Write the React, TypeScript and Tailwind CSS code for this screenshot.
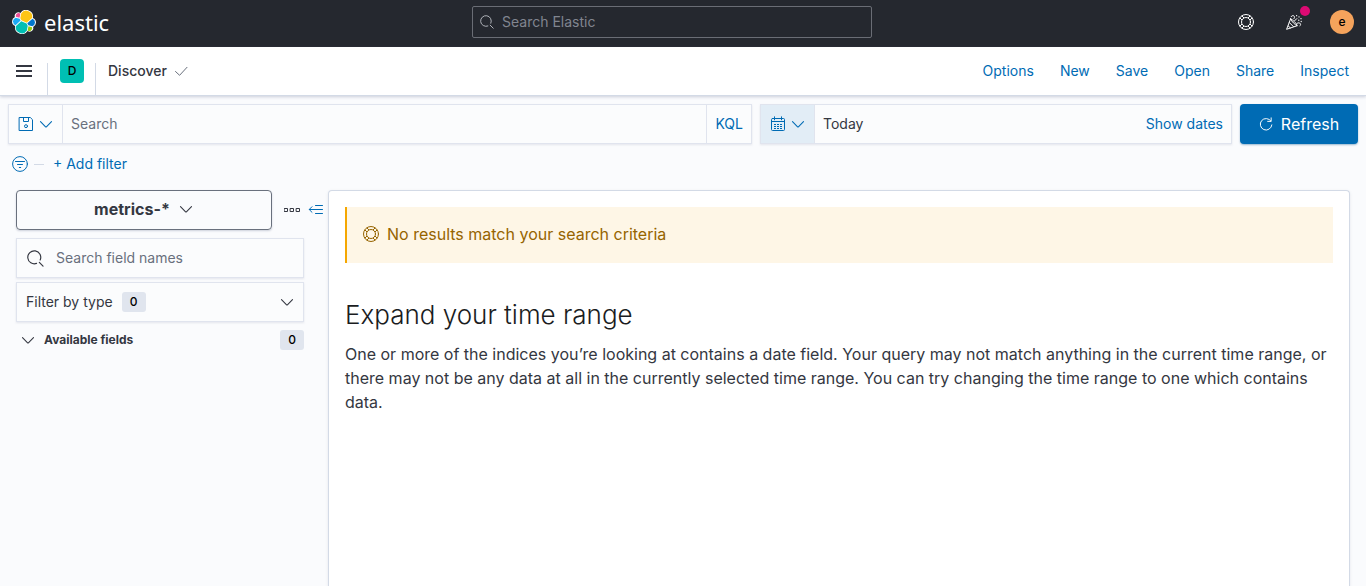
import type { ReactNode } from "react";

type IconProps = { className?: string };

function Svg({ className = "size-4", children }: IconProps & { children: ReactNode }) {
  return (
    <svg
      viewBox="0 0 16 16"
      fill="none"
      stroke="currentColor"
      strokeLinecap="round"
      strokeLinejoin="round"
      aria-hidden="true"
      className={`shrink-0 ${className}`}
    >
      {children}
    </svg>
  );
}

const ChevronDown = ({ className }: IconProps) => (
  <Svg className={className}>
    <path d="M2.5 5.7 7.6 10.8a.6.6 0 0 0 .8 0L13.5 5.7" strokeWidth="1.1" />
  </Svg>
);

const SearchIcon = ({ className }: IconProps) => (
  <Svg className={className}>
    <path d="M9 12.6A6.1 6.1 0 1 1 12.4 9.4M11.6 11.6l3.5 3.5" strokeWidth="1.1" />
  </Svg>
);

const HelpIcon = ({ className }: IconProps) => (
  <Svg className={className}>
    <circle cx="8" cy="8" r="7.5" />
    <circle cx="8" cy="8" r="4.5" />
    <path
      d="M12 10l2.2 2.2M10 12l2.2 2.2M4 10l-2.2 2.2M6 12l-2.2 2.2M4 6 1.8 3.8M6 4 3.8 1.8M12 6l2.2-2.2M10 4l2.2-2.2"
      strokeLinecap="butt"
    />
  </Svg>
);

const CheerIcon = ({ className }: IconProps) => (
  <Svg className={className}>
    <path
      d="M4.6 4.9.6 15.3l10.6-3.6C9.4 11 5.4 7.6 4.6 4.9ZM4.6 4.9c1.6.2 6.6 4.8 6.6 6.8M3.4 8.6l4 4M2.2 11.9l2.2 2M8.4 7l2.4-2.4M11 9.4c1.2-.9 2.8-.8 3.4.4.4.9.2 1.6-.4 2M5.2 2.6c.6-1.1 2.2-1.4 3-.4.6.8.3 1.8-.4 2.6"
    />
    <path d="M10.6 1.6v.1M13 2.8v.1M15 4.6v.1M12.8 6.2v.1M15.2 7.4v.1" strokeWidth="1.3" />
  </Svg>
);

const SaveIcon = ({ className }: IconProps) => (
  <Svg className={className}>
    <path d="M1.5 1.5h10.8l2.2 2.2v10.8h-13ZM5.5 1.5v4h5v-4" />
    <circle cx="8" cy="10.2" r="1.5" />
  </Svg>
);

const CalendarIcon = ({ className }: IconProps) => (
  <Svg className={className}>
    <path d="M2.5 2.5h11a1 1 0 0 1 1 1v10a1 1 0 0 1-1 1h-11a1 1 0 0 1-1-1v-10a1 1 0 0 1 1-1ZM1.5 5.5h13M4.5.8v3M11.5.8v3" />
    <path
      d="M4 8.5h2M7 8.5h2M10 8.5h2M4 10.5h2M7 10.5h2M10 10.5h2M4 12.5h2M7 12.5h2M10 12.5h2"
      strokeLinecap="butt"
    />
  </Svg>
);

const RefreshIcon = ({ className }: IconProps) => (
  <Svg className={className}>
    <path d="M13.6 4.6A6.6 6.6 0 1 0 14.7 9M13.9 1v4h-4" strokeWidth="1.1" />
  </Svg>
);

const FilterIcon = ({ className }: IconProps) => (
  <Svg className={className}>
    <circle cx="8" cy="8" r="7.4" />
    <path d="M3.5 5.5h9M5.5 8.5h5M7.3 11.5h1.4" />
  </Svg>
);

const BoxesIcon = ({ className }: IconProps) => (
  <Svg className={className}>
    <path d="M.5 6.5h3v3h-3ZM6.5 6.5h3v3h-3ZM12.5 6.5h3v3h-3Z" strokeLinejoin="miter" />
  </Svg>
);

const CollapseIcon = ({ className }: IconProps) => (
  <Svg className={className}>
    <path d="M7.5 3.5h7M1.5 7.5h13M7.5 11.5h7M4 4.7 1.2 7.5 4 10.3" />
  </Svg>
);

function Logo() {
  return (
    <svg viewBox="0 0 32 32" aria-hidden="true" className="size-6 shrink-0">
      <path
        fill="#fff"
        d="M32 16.77c0-2.68-1.66-5.03-4.17-5.95a9.1 9.1 0 0 0-16.5-6.86 4.84 4.84 0 0 0-7.47 5.52A6.38 6.38 0 0 0 0 15.2a6.36 6.36 0 0 0 4.2 5.97 9.1 9.1 0 0 0 16.48 6.85 4.84 4.84 0 0 0 7.46-5.5A6.38 6.38 0 0 0 32 16.77"
      />
      <path fill="#FEC514" d="m12.58 13.79 7 3.2 7.07-6.2a7.9 7.9 0 0 0-14.4-6.02l-1.18 6.09z" />
      <path fill="#00BFB3" d="M5.33 21.2a7.9 7.9 0 0 0 14.44 6l1.17-6.07-1.56-2.98-7.03-3.2z" />
      <path fill="#F04E98" d="m5.29 9.07 4.8 1.13 1.05-5.46A3.79 3.79 0 0 0 5.3 9.07" />
      <path fill="#1BA9F5" d="M4.87 10.21a5.35 5.35 0 0 0-.18 10.02l6.73-6.08-1.24-2.64z" />
      <path fill="#93C90E" d="M20.87 27.19a3.78 3.78 0 0 0 5.83-4.3l-4.8-1.12z" />
      <path fill="#07C" d="m21.85 20.47 5.28 1.23a5.35 5.35 0 0 0 .18-10.02l-6.91 6.05z" />
    </svg>
  );
}

const menu = ["Options", "New", "Save", "Open", "Share", "Inspect"];

function CountBadge() {
  return (
    <span className="flex h-5 w-6 items-center justify-center rounded-[3px] bg-[#e0e5ee] text-xs font-medium text-black">
      0
    </span>
  );
}

export default function App() {
  return (
    <div className="flex min-h-screen flex-col bg-[#fafbfd] font-[Inter,sans-serif] text-sm text-[#343741]">
      <header className="grid h-[47px] grid-cols-[1fr_400px_1fr_22px] items-center bg-[#25282f] px-3 pb-[3px]">
        <a href="#home" className="flex items-center gap-2 text-white">
          <Logo />
          <span className="font-['Noto_Sans',sans-serif] text-[22px] leading-6">elastic</span>
        </a>
        <label className="flex h-8 items-center gap-2 rounded-xs border border-[#6a6d75] px-[7px] text-[#b5b8be]">
          <SearchIcon className="size-3.5" />
          <input
            type="search"
            aria-label="Search Elastic"
            placeholder="Search Elastic"
            className="min-w-0 flex-1 bg-transparent outline-none placeholder:text-[#81858f]"
          />
        </label>
        <div className="col-span-2 flex items-center justify-end gap-8 text-white">
          <button type="button" aria-label="Help">
            <HelpIcon />
          </button>
          <button type="button" aria-label="News" className="relative">
            <CheerIcon />
            <span className="absolute -top-2 -right-2 size-2.5 rounded-full bg-[#dd0a73]" />
          </button>
          <button
            type="button"
            aria-label="Account"
            className="-ml-1 flex size-6 items-center justify-center rounded-full bg-[#f5a35c] text-xs font-medium text-black"
          >
            e
          </button>
        </div>
      </header>

      <nav className="relative flex h-[49px] items-stretch border-b border-[#d3dae6] bg-white shadow-[0_1px_3px_rgba(100,110,140,0.3)]">
        <button type="button" aria-label="Open menu" className="flex w-12 items-center justify-center">
          <svg viewBox="0 0 16 12" className="h-3 w-4" fill="currentColor" aria-hidden="true">
            <path d="M0 0h16v2H0ZM0 5h16v2H0ZM0 10h16v2H0Z" />
          </svg>
        </button>
        <div className="-ml-px mt-4 w-px bg-[#d3dae6]" />
        <div className="flex w-12 items-center justify-center">
          <button
            type="button"
            aria-label="Default space"
            className="flex size-6 items-center justify-center rounded-sm bg-[#00bfb3] text-xs font-medium text-black"
          >
            D
          </button>
        </div>
        <div className="-ml-px mt-4 w-px bg-[#d3dae6]" />
        <div className="flex items-center gap-1.5 pl-3">
          <span className="font-medium">Discover</span>
          <Svg className="size-4 text-[#69707d]">
            <path d="M2.5 8.5 6.6 12.3 14 4.3" />
          </Svg>
        </div>
        <div className="ml-auto flex items-center gap-[26px] pr-[17px]">
          {menu.map((item) => (
            <a key={item} href={`#${item.toLowerCase()}`} className="text-[#006bb4]">
              {item}
            </a>
          ))}
        </div>
      </nav>

      <div className="flex gap-2 px-2 pt-2">
        <div className="flex h-10 flex-1 border border-[#e0e4ee] bg-[#fbfcfd] shadow-[0_1px_2px_rgba(100,110,140,0.15)]">
          <button
            type="button"
            aria-label="Saved queries"
            className="flex w-[54px] items-center justify-center gap-1 border-r border-[#e0e4ee] text-[#006bb4]"
          >
            <SaveIcon />
            <ChevronDown />
          </button>
          <input
            aria-label="Search"
            placeholder="Search"
            className="min-w-0 flex-1 bg-transparent px-2 outline-none placeholder:text-[#69707d]"
          />
          <button type="button" className="border-l border-[#e0e4ee] px-2 text-[#006bb4]">
            KQL
          </button>
        </div>
        <div className="flex h-10 w-[472px] border border-[#e0e4ee] bg-[#fbfcfd] shadow-[0_1px_2px_rgba(100,110,140,0.15)]">
          <button
            type="button"
            aria-label="Quick date ranges"
            className="flex w-[54px] items-center justify-center gap-1 border-r border-[#e0e4ee] bg-[#e2edf6] text-[#006bb4]"
          >
            <CalendarIcon />
            <ChevronDown />
          </button>
          <button type="button" className="flex flex-1 items-center justify-between px-2">
            <span>Today</span>
            <span className="text-[#006bb4]">Show dates</span>
          </button>
        </div>
        <button
          type="button"
          className="flex h-10 w-[118px] items-center justify-center gap-2 rounded-sm bg-[#006bb4] text-base text-white shadow-[0_1px_2px_rgba(0,80,140,0.4)]"
        >
          <RefreshIcon className="size-3.5" />
          Refresh
        </button>
      </div>

      <div className="flex h-10 items-center px-3 text-[#006bb4]">
        <button type="button" aria-label="Filter options">
          <FilterIcon />
        </button>
        <span className="mx-1.5 h-px w-2.5 bg-[#d3dae6]" />
        <button type="button" className="ml-[3px]">
          + Add filter
        </button>
      </div>

      <div className="flex flex-1 pt-1.5 pr-4 pl-4">
        <aside className="w-[312px] shrink-0">
          <div className="flex items-center">
            <button
              type="button"
              className="flex h-10 w-64 items-center justify-center gap-2 rounded-sm border border-[#69707d] pb-0.5 text-base font-bold shadow-[0_1px_2px_rgba(100,110,140,0.3)]"
            >
              metrics-*
              <ChevronDown />
            </button>
            <button type="button" aria-label="Index pattern settings" className="ml-3">
              <BoxesIcon />
            </button>
            <button type="button" aria-label="Collapse sidebar" className="ml-2 text-[#006bb4]">
              <CollapseIcon />
            </button>
          </div>
          <div className="mt-2 mr-6">
            <label className="flex h-10 items-center gap-3 border border-[#e0e4ee] bg-[#fbfcfd] px-2.5 shadow-[0_1px_2px_rgba(100,110,140,0.15)]">
              <SearchIcon className="size-[17px]" />
              <input
                type="search"
                aria-label="Search field names"
                placeholder="Search field names"
                className="min-w-0 flex-1 bg-transparent outline-none placeholder:text-[#69707d]"
              />
            </label>
            <button
              type="button"
              className="mt-1 flex h-10 w-full items-center border border-[#e0e4ee] bg-[#fbfcfd] pr-2 pl-[9px] shadow-[0_1px_2px_rgba(100,110,140,0.15)]"
            >
              <span className="mr-[9px]">Filter by type</span>
              <CountBadge />
              <ChevronDown className="ml-auto size-4" />
            </button>
            <button type="button" className="mt-2 flex w-full items-center gap-2 pl-1 text-xs font-bold">
              <ChevronDown />
              <span className="flex-1 text-left">Available fields</span>
              <CountBadge />
            </button>
          </div>
        </aside>

        <main className="min-w-0 flex-1 rounded-t-sm border border-b-0 border-[#d3dae6] bg-white p-4 shadow-[0_1px_3px_rgba(100,110,140,0.15)]">
          <div className="flex h-14 items-center gap-2 border-l-2 border-[#f5a700] bg-[#fef6e6] px-4 pb-0.5 text-base text-[#966400]">
            <HelpIcon />
            No results match your search criteria
          </div>
          <h2 className="mt-8 text-[26px] leading-10 font-light text-[#1a1c21]">Expand your time range</h2>
          <p className="mt-[7px] text-base leading-6">
            One or more of the indices you’re looking at contains a date field. Your query may not match anything in the
            current time range, or there may not be any data at all in the currently selected time range. You can try
            changing the time range to one which contains data.
          </p>
        </main>
      </div>
    </div>
  );
}
